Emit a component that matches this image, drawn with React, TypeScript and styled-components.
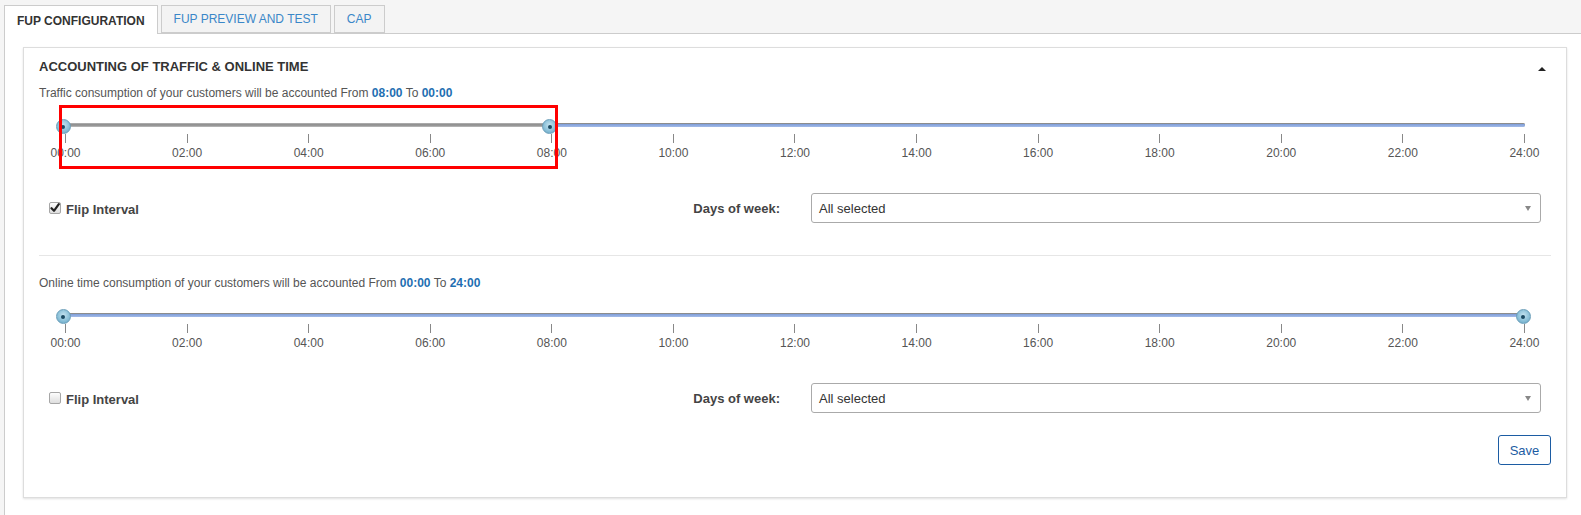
import React from "react";
import styled, { createGlobalStyle } from "styled-components";

const Global = createGlobalStyle`
  html, body { margin: 0; padding: 0; }
  body {
    background: #f5f5f5;
    font-family: "Liberation Sans", Arial, sans-serif;
    color: #333;
  }
`;

const Page = styled.div`
  padding: 5px 0 0 4px;
  min-height: 100vh;
  box-sizing: border-box;
  display: flex;
  flex-direction: column;
`;

const TabBar = styled.div`
  display: flex;
  gap: 3px;
  height: 28px;
  position: relative;
  z-index: 1;
`;

const Tab = styled.div<{ $active?: boolean }>`
  box-sizing: border-box;
  height: ${(p) => (p.$active ? "29px" : "28px")};
  padding: 0 12px;
  display: flex;
  align-items: center;
  font-size: 12px;
  text-transform: uppercase;
  font-weight: ${(p) => (p.$active ? 700 : 400)};
  color: ${(p) => (p.$active ? "#333" : "#3a87c8")};
  background: ${(p) => (p.$active ? "#fff" : "#f3f3f3")};
  border: 1px solid #ccc;
  border-bottom: ${(p) => (p.$active ? "none" : "1px solid #ccc")};
  padding-top: ${(p) => (p.$active ? "1px" : "0")};
`;

const Pane = styled.div`
  flex: 1;
  background: #fff;
  border-top: 1px solid #ccc;
  border-left: 1px solid #ccc;
  padding: 13px 14px 18px 18px;
`;

const Card = styled.div`
  background: #fff;
  border: 1px solid #ddd;
  box-shadow: 0 1px 2px rgba(0, 0, 0, 0.12);
  padding: 0 15px 32px 15px;
`;

const CardHeader = styled.div`
  margin-top: 11px;
  display: flex;
  align-items: center;
  justify-content: space-between;
  height: 15px;
`;

const CardTitle = styled.div`
  font-size: 13px;
  font-weight: 700;
  color: #333;
  line-height: 15px;
`;

const Caret = styled.div`
  width: 0;
  height: 0;
  border-left: 4px solid transparent;
  border-right: 4px solid transparent;
  border-bottom: 4px solid #222;
  margin-right: 5px;
  margin-top: 5px;
`;

const Desc = styled.div<{ $top: number }>`
  margin-top: ${(p) => p.$top}px;
  font-size: 12px;
  line-height: 14px;
  color: #555;
`;

const Val = styled.b`
  color: #1f6fb2;
`;

const SliderWrap = styled.div`
  position: relative;
  margin: 23px 26px 0 26px;
`;

const Highlight = styled.div`
  position: absolute;
  left: -6px;
  top: -18px;
  width: 499px;
  height: 64px;
  box-sizing: border-box;
  border: 3px solid #ff0000;
  z-index: 2;
  pointer-events: none;
`;

const Track = styled.div`
  position: relative;
  height: 4px;
  border-radius: 2px;
  background: linear-gradient(#c4c4c4 0, #8f8f8f 1px, #9a9a9a 3px, #c8c8c8 4px);
`;

const Range = styled.div`
  position: absolute;
  top: 0;
  bottom: 0;
  border-radius: 2px;
  background: linear-gradient(#8c8c8c 0, #8c8c8c 1px, #7d9cd8 1px, #a3bbe8 4px);
`;

const Handle = styled.div`
  position: absolute;
  top: -4px;
  width: 15px;
  height: 15px;
  box-sizing: border-box;
  border-radius: 50%;
  border: 1px solid #6b9fba;
  background: radial-gradient(circle at 50% 40%, #c5e3f0 0, #8cc1d9 55%, #5f9fbf 100%);
  display: flex;
  align-items: center;
  justify-content: center;
  &::after {
    content: "";
    width: 4px;
    height: 4px;
    border-radius: 50%;
    background: #1b4a63;
  }
`;

const Ticks = styled.div`
  display: flex;
  justify-content: space-between;
  margin-top: 7px;
`;

const TickCol = styled.div`
  width: 1px;
  display: flex;
  flex-direction: column;
  align-items: center;
`;

const TickLine = styled.div`
  width: 1px;
  height: 9px;
  background: #888;
`;

const TickLabel = styled.div`
  margin-top: 3px;
  font-size: 12px;
  line-height: 14px;
  color: #555;
  white-space: nowrap;
`;

const FormRow = styled.div`
  margin-top: 33px;
  display: grid;
  grid-template-columns: 1fr 730px;
  align-items: center;
  column-gap: 31px;
  margin-right: 10px;
`;

const LeftCell = styled.div`
  display: flex;
  align-items: center;
  justify-content: space-between;
`;

const CheckLabel = styled.label`
  display: flex;
  align-items: center;
  gap: 5px;
  margin-left: 10px;
  margin-top: 2px;
  font-size: 13px;
  font-weight: 700;
  color: #444;
`;

const CheckBox = styled.span`
  width: 12px;
  height: 12px;
  box-sizing: border-box;
  border: 1px solid #a6a6a6;
  border-radius: 2px;
  background: linear-gradient(#fdfdfd, #dedede);
  display: flex;
  align-items: center;
  justify-content: center;
  margin-top: -3px;
`;

const FieldLabel = styled.div`
  font-size: 13px;
  font-weight: 700;
  color: #444;
`;

const Select = styled.div`
  height: 30px;
  box-sizing: border-box;
  border: 1px solid #aaa;
  border-radius: 3px;
  display: flex;
  align-items: center;
  justify-content: space-between;
  padding: 0 9px 0 7px;
  font-size: 13px;
  color: #333;
  background: #fff;
`;

const Arrow = styled.span`
  width: 0;
  height: 0;
  border-left: 3.5px solid transparent;
  border-right: 3.5px solid transparent;
  border-top: 5px solid #888;
`;

const Separator = styled.div`
  margin-top: 32px;
  border-top: 1px solid #e6e6e6;
`;

const Footer = styled.div`
  margin-top: 22px;
  display: flex;
  justify-content: flex-end;
`;

const SaveButton = styled.button`
  width: 53px;
  height: 30px;
  border: 1px solid #1c5ca3;
  border-radius: 3px;
  background: #fff;
  color: #1c5ca3;
  font-family: "Liberation Sans", Arial, sans-serif;
  font-size: 13px;
  padding: 0;
`;

const HOURS = Array.from({ length: 13 }, (_, i) => `${String(i * 2).padStart(2, "0")}:00`);

function Slider({
  from,
  to,
  rangeFrom,
  rangeTo,
  highlighted,
}: {
  from: number;
  to: number;
  rangeFrom: number;
  rangeTo: number;
  highlighted?: boolean;
}) {
  const pct = (h: number) => (h / 24) * 100;
  return (
    <SliderWrap>
      {highlighted && <Highlight />}
      <Track>
        <Range style={{ left: `${pct(rangeFrom)}%`, right: `${100 - pct(rangeTo)}%` }} />
        <Handle style={{ left: `calc(${pct(from)}% - 9.5px)` }} />
        <Handle style={{ left: `calc(${pct(to)}% - 9.5px)` }} />
      </Track>
      <Ticks>
        {HOURS.map((h) => (
          <TickCol key={h}>
            <TickLine />
            <TickLabel>{h}</TickLabel>
          </TickCol>
        ))}
      </Ticks>
    </SliderWrap>
  );
}

function Check({ checked }: { checked?: boolean }) {
  return (
    <CheckBox>
      {checked && (
        <svg width="10" height="10" viewBox="0 0 10 10">
          <path d="M1.5 5.2 L4 7.8 L8.8 1.2" fill="none" stroke="#222" strokeWidth="2.2" strokeLinecap="round" strokeLinejoin="round" />
        </svg>
      )}
    </CheckBox>
  );
}

function Row({ checked }: { checked?: boolean }) {
  return (
    <FormRow>
      <LeftCell>
        <CheckLabel>
          <Check checked={checked} />
          Flip Interval
        </CheckLabel>
        <FieldLabel>Days of week:</FieldLabel>
      </LeftCell>
      <Select>
        All selected
        <Arrow />
      </Select>
    </FormRow>
  );
}

export default function App() {
  return (
    <>
      <Global />
      <Page>
        <TabBar>
          <Tab $active>FUP Configuration</Tab>
          <Tab>FUP Preview and test</Tab>
          <Tab>CAP</Tab>
        </TabBar>
        <Pane>
          <Card>
            <CardHeader>
              <CardTitle>ACCOUNTING OF TRAFFIC &amp; ONLINE TIME</CardTitle>
              <Caret />
            </CardHeader>
            <Desc $top={12}>
              Traffic consumption of your customers will be accounted From <Val>08:00</Val> To <Val>00:00</Val>
            </Desc>
            <Slider from={0} to={8} rangeFrom={8} rangeTo={24} highlighted />
            <Row checked />
            <Separator />
            <Desc $top={20}>
              Online time consumption of your customers will be accounted From <Val>00:00</Val> To <Val>24:00</Val>
            </Desc>
            <Slider from={0} to={24} rangeFrom={0} rangeTo={24} />
            <Row />
            <Footer>
              <SaveButton>Save</SaveButton>
            </Footer>
          </Card>
        </Pane>
      </Page>
    </>
  );
}
